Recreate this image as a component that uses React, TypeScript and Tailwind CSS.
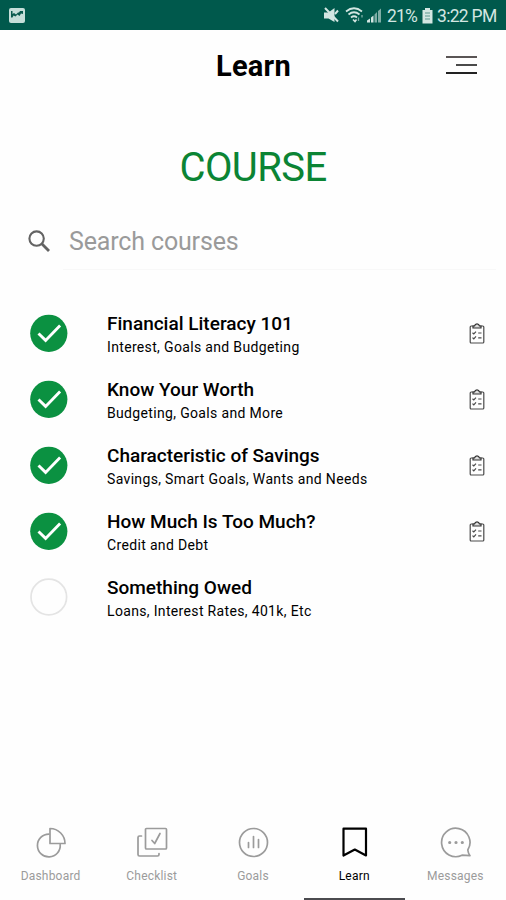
import { ReactNode } from "react";
import clsx from "clsx";

interface ICourse {
    title: string
    topics: string
    done: boolean
}

interface ITab {
    label: string
    icon: ReactNode
    active?: boolean
}

const courses: ICourse[] = [
    { title: "Financial Literacy 101", topics: "Interest, Goals and Budgeting", done: true },
    { title: "Know Your Worth", topics: "Budgeting, Goals and More", done: true },
    { title: "Characteristic of Savings", topics: "Savings, Smart Goals, Wants and Needs", done: true },
    { title: "How Much Is Too Much?", topics: "Credit and Debt", done: true },
    { title: "Something Owed", topics: "Loans, Interest Rates, 401k, Etc", done: false },
]

const tabs: ITab[] = [
    {
        label: "Dashboard",
        icon: (
            <>
                <path d="M14 7.1A11.4 11.4 0 1 0 25.2 17.5" />
                <path d="M15 1.5V16.5H30C30 8.5 23.5 1.5 15 1.5Z" />
            </>
        ),
    },
    {
        label: "Checklist",
        icon: (
            <>
                <rect x="9.5" y="1.5" width="21" height="20.5" rx="1" />
                <path d="M5.5 9H3.5Q2 9 2 10.5V27.5Q2 29 3.5 29H21.5Q23 29 23 27.5V26.5" />
                <path d="M16 13.5L18.7 16.5L24 6.5" />
            </>
        ),
    },
    {
        label: "Goals",
        icon: (
            <>
                <circle cx="16.5" cy="15.5" r="14" />
                <path d="M11.5 15.5V20.5M16.5 9.5V20.5M21.5 12.5V20.5" />
            </>
        ),
    },
    {
        label: "Learn",
        active: true,
        icon: <path d="M5.5 1.7H28V28.5L16.8 22.5L5.5 28.5Z" />,
    },
    {
        label: "Messages",
        icon: (
            <>
                <path d="M28.8 23A14.2 14.2 0 1 0 23 28.2L31 28.7Q29.2 26.5 28.8 23Z" />
                <path d="M10.7 15.5H10.71M17 15.5H17.01M23.3 15.5H23.31" strokeWidth="3.2" />
            </>
        ),
    },
]

const StatusBar = () => (
    <div className="flex h-[30px] items-center bg-[#00594c] pl-[9px] pr-[10px] text-[#d3e6e2]">
        <svg width="16" height="15" viewBox="0 0 16 15">
            <rect width="16" height="15" rx="2" fill="#c5ded9" />
            <path d="M2 3H3.5V6L5 5L7 6.5L9 4.5H10L11 3H14V6L12 5.5L10.5 8L8.5 6.5L6.5 8.5L4.5 7.5L3.5 9.5H2Z" fill="#0b5a4e" />
        </svg>
        <svg className="ml-auto" width="15" height="16" viewBox="0 0 15 16" fill="currentColor">
            <path d="M0 5.5H4.5L10.5 1V15L4.5 11.5H0Z" />
            <path d="M1 1L14 14.5M11 7L14 3.5" stroke="currentColor" strokeWidth="2" />
        </svg>
        <svg className="ml-[6px]" width="20" height="16" viewBox="0 0 20 16" fill="none" stroke="currentColor" strokeWidth="1.7">
            <path d="M1 4.5Q9 -2 17 4.5M3.5 7.5Q9 3 14.5 7.5M6 10.5Q9 8 12 10.5" />
            <path d="M8 12.5L10 14.5L11.5 12.5" strokeWidth="1.6" />
            <path d="M13.5 10.5V14M17 8V10.5" strokeWidth="1.3" opacity=".6" />
        </svg>
        <svg className="ml-[2px] mt-px" width="15" height="15" viewBox="0 0 15 15" fill="currentColor">
            <path d="M0 14.5V12.5L3 10.5V14.5ZM4 14.5V9.5L6.5 7.5V14.5Z" />
            <path d="M7.5 14.5V6.5L10 4V14.5ZM11 14.5V3L14 .5V14.5Z" opacity=".6" />
        </svg>
        <span className="ml-[5px] mt-[3px] w-[29px] whitespace-nowrap text-[17.5px] tracking-[-0.8px] leading-none">21%</span>
        <svg className="ml-[6px] mt-px" width="11" height="16" viewBox="0 0 11 16" fill="currentColor">
            <path d="M3 0H8V2H10.5V15.5H.5V2H3Z" />
            <path d="M3 5H8M3 8H8M3 11H8" stroke="#5c968d" strokeWidth="1.2" />
        </svg>
        <span className="ml-[4px] mt-[3px] w-[59px] whitespace-nowrap text-[17.5px] tracking-[-0.7px] leading-none">3:22 PM</span>
    </div>
)

const CheckCircle = ({ done }: { done: boolean }) => (
    <svg className="shrink-0" width="38" height="38" viewBox="0 0 38 38" fill="none">
        {done ? (
            <>
                <circle cx="18.8" cy="19.3" r="18.6" fill="#0b9141" />
                <path d="M8.5 19.5L15.6 26.4L30.1 11.6" stroke="#fff" strokeWidth="2.9" />
            </>
        ) : (
            <circle cx="18.8" cy="19" r="17.8" stroke="#e4e4e4" strokeWidth="1.7" />
        )}
    </svg>
)

const ClipboardIcon = () => (
    <svg width="16" height="21" viewBox="0 0 16 21" fill="none" stroke="#4a4a4a" strokeWidth="1.2">
        <rect x="1.2" y="3" width="13.6" height="17" rx="1" />
        <path d="M4 3H5.5Q6 .8 8 .8T10.5 3H12V5H4Z" fill="#ddd" stroke="#333" />
        <path d="M3.5 9.8L4.8 11L7 8.6M3.5 14.6L4.8 15.8L7 13.4M9.2 10H12.5M9.2 14.8H12.5" />
    </svg>
)

export default function App() {
    return (
        <div className="flex h-[900px] w-[506px] flex-col overflow-hidden bg-[#fefefe] font-[Roboto,sans-serif] text-black">
            <StatusBar />

            <header className="grid h-[72px] grid-cols-[1fr_auto_1fr] items-center pr-[29px]">
                <h1 className="col-start-2 ml-[30px] text-[29px] font-bold leading-none tracking-[0.25px]">Learn</h1>
                <button className="mb-[3px] flex h-[18px] w-[31px] flex-col items-end justify-between justify-self-end">
                    <span className="h-[2px] w-full bg-[#5a5555]" />
                    <span className="h-[2px] w-[21px] bg-[#4a4a4a]" />
                    <span className="h-[2px] w-full bg-[#222]" />
                </button>
            </header>

            <h2 className="mt-[46px] text-center text-[40px] leading-[40px] tracking-[-0.6px] text-[#0b8434]">COURSE</h2>

            <div className="mt-[26px] flex h-[56px] items-center pl-[28px] pr-[10px]">
                <svg className="-mt-[2px]" width="22" height="22" viewBox="0 0 22 22" fill="none" stroke="#636363">
                    <circle cx="8.6" cy="8.6" r="7.2" strokeWidth="2.1" />
                    <path d="M13.8 13.8L21 21" strokeWidth="2.8" />
                </svg>
                <div className="ml-[13px] flex h-full flex-1 items-center border-b border-[#f8f8f8] pl-[6px]">
                    <span className="text-[25px] leading-none tracking-[-0.15px] text-[#9a9a9a]">Search courses</span>
                </div>
            </div>

            <ul className="mt-[30px]">
                {courses.map((course) => (
                    <li key={course.title} className="flex h-[66.1px] items-center pl-[30px] pr-[21px]">
                        <CheckCircle done={course.done} />
                        <div className="ml-[39px] mt-[4px] flex-1 whitespace-nowrap">
                            <p className="text-[19px] font-medium leading-[24px]">{course.title}</p>
                            <p className="text-[14px] leading-[22px] tracking-[0.34px]">{course.topics}</p>
                        </div>
                        {course.done && <ClipboardIcon />}
                    </li>
                ))}
            </ul>

            <nav className="mt-auto grid h-[80px] grid-cols-5">
                {tabs.map((tab) => (
                    <div
                        key={tab.label}
                        className={clsx(
                            "flex flex-col items-center border-b-2 pt-[7px]",
                            tab.active ? "border-[#4b4b4f] text-black" : "border-transparent text-[#9b9b9b]"
                        )}
                    >
                        <svg width="32" height="32" viewBox="0 0 32 32" fill="none" stroke="currentColor" strokeWidth={tab.active ? 2.2 : 1.7} strokeLinecap="round" strokeLinejoin="round">
                            {tab.icon}
                        </svg>
                        <span className="mt-[10px] text-[12px] leading-[14px] tracking-[0.2px]">{tab.label}</span>
                    </div>
                ))}
            </nav>
        </div>
    )
}
